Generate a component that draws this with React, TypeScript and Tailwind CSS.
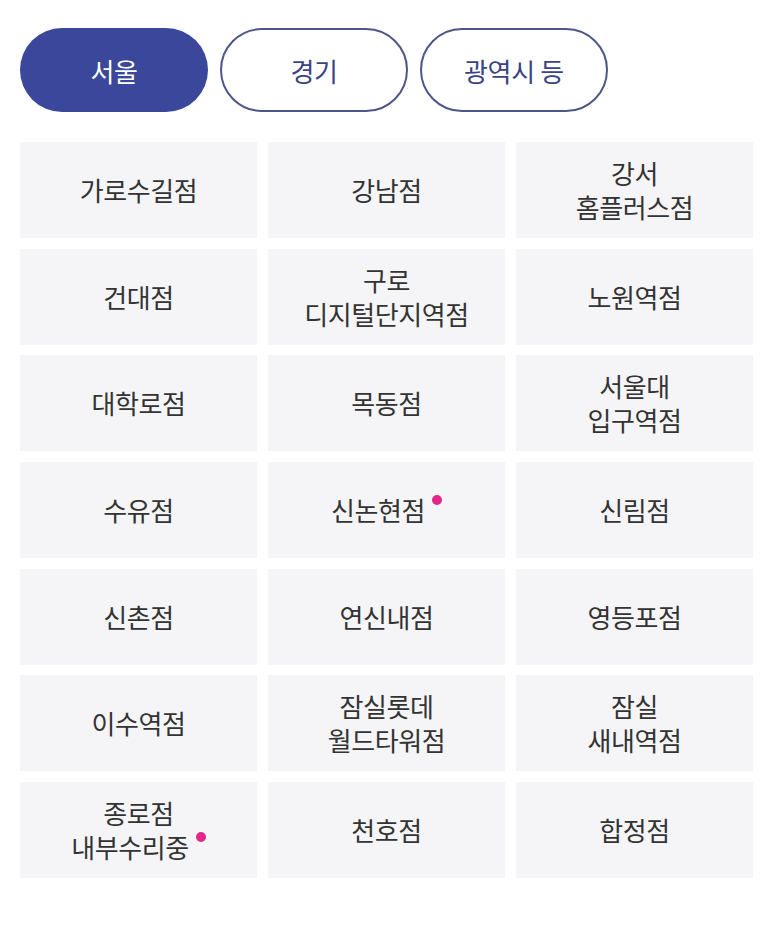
const tabs = ['서울', '경기', '광역시 등']

interface Store {
  lines: string[]
  dot?: boolean
}

const stores: Store[] = [
  { lines: ['가로수길점'] },
  { lines: ['강남점'] },
  { lines: ['강서', '홈플러스점'] },
  { lines: ['건대점'] },
  { lines: ['구로', '디지털단지역점'] },
  { lines: ['노원역점'] },
  { lines: ['대학로점'] },
  { lines: ['목동점'] },
  { lines: ['서울대', '입구역점'] },
  { lines: ['수유점'] },
  { lines: ['신논현점'], dot: true },
  { lines: ['신림점'] },
  { lines: ['신촌점'] },
  { lines: ['연신내점'] },
  { lines: ['영등포점'] },
  { lines: ['이수역점'] },
  { lines: ['잠실롯데', '월드타워점'] },
  { lines: ['잠실', '새내역점'] },
  { lines: ['종로점', '내부수리중'], dot: true },
  { lines: ['천호점'] },
  { lines: ['합정점'] },
]

export default function App() {
  return (
    <div
      className="min-h-[939px] w-[773px] bg-white px-5 pt-[28px]"
      style={{ fontFamily: '"Noto Sans CJK KR", "Noto Sans", sans-serif' }}
    >
      {/* 지역 탭 */}
      <div className="flex gap-3">
        {tabs.map((tab, i) => (
          <button
            key={tab}
            className={`flex h-[84px] w-[188px] items-center justify-center rounded-full text-[26px] tracking-[-0.3px] ${
              i === 0
                ? 'bg-[#3a479b] text-white'
                : 'border-2 border-[#4d5688] bg-white text-[#3a4383]'
            }`}
          >
            {tab}
          </button>
        ))}
      </div>

      {/* 매장 목록 */}
      <div className="mt-[30px] grid grid-cols-3 gap-x-[11px] gap-y-[10.7px]">
        {stores.map((store) => (
          <div
            key={store.lines.join('')}
            className="flex h-[96px] flex-col items-center justify-center bg-[#f5f5f7] text-[26px] leading-[34px] tracking-[-0.4px] text-[#333333]"
          >
            {store.lines.map((line, i) => (
              <span key={line} className="flex items-start">
                {line}
                {store.dot && i === store.lines.length - 1 && (
                  <span className="ml-[7px] mt-[2px] h-[10px] w-[10px] rounded-full bg-[#e3268b]" />
                )}
              </span>
            ))}
          </div>
        ))}
      </div>
    </div>
  )
}
